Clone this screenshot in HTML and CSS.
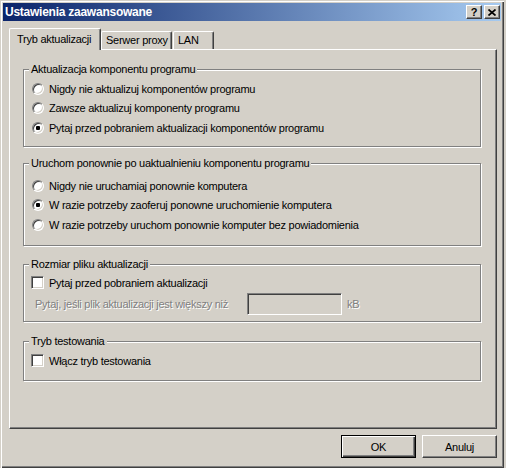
FILE: index.html
```html
<!DOCTYPE html>
<html lang="pl">
<head>
    <meta charset="UTF-8">
    <title>Ustawienia zaawansowane</title>
    <link rel="stylesheet" href="styles.css">
</head>
<body>
    <div class="window">
        <div class="titlebar">
            <span class="title">Ustawienia zaawansowane</span>
            <div class="caption-buttons">
                <button class="cap-btn help">?</button>
                <button class="cap-btn close">
                    <svg width="8" height="7" viewBox="0 0 8 7"><path d="M0.5 0.5 L7.5 6.5 M7.5 0.5 L0.5 6.5" stroke="#000" stroke-width="1.7" fill="none"/></svg>
                </button>
            </div>
        </div>

        <div class="tabs">
            <div class="tab active">Tryb aktualizacji</div>
            <div class="tab t-proxy">Serwer proxy</div>
            <div class="tab t-lan">LAN</div>
        </div>

        <div class="panel">
            <div class="group g1">
                <div class="group-title">Aktualizacja komponentu programu</div>
                <div class="rows">
                    <label class="row"><input type="radio" name="upd"> Nigdy nie aktualizuj komponentów programu</label>
                    <label class="row"><input type="radio" name="upd"> Zawsze aktualizuj komponenty programu</label>
                    <label class="row"><input type="radio" name="upd" checked> Pytaj przed pobraniem aktualizacji komponentów programu</label>
                </div>
            </div>

            <div class="group g2">
                <div class="group-title">Uruchom ponownie po uaktualnieniu komponentu programu</div>
                <div class="rows">
                    <label class="row"><input type="radio" name="rst"> Nigdy nie uruchamiaj ponownie komputera</label>
                    <label class="row"><input type="radio" name="rst" checked> W razie potrzeby zaoferuj ponowne uruchomienie komputera</label>
                    <label class="row"><input type="radio" name="rst"> W razie potrzeby uruchom ponownie komputer bez powiadomienia</label>
                </div>
            </div>

            <div class="group g3">
                <div class="group-title">Rozmiar pliku aktualizacji</div>
                <div class="rows">
                    <label class="row"><input type="checkbox"> Pytaj przed pobraniem aktualizacji</label>
                    <div class="row size-row">
                        <span class="disabled size-label">Pytaj, jeśli plik aktualizacji jest większy niż</span>
                        <input type="text" class="size-input" disabled>
                        <span class="disabled">kB</span>
                    </div>
                </div>
            </div>

            <div class="group g4">
                <div class="group-title">Tryb testowania</div>
                <div class="rows">
                    <label class="row"><input type="checkbox"> Włącz tryb testowania</label>
                </div>
            </div>
        </div>

        <div class="actions">
            <button class="btn default">OK</button>
            <button class="btn">Anuluj</button>
        </div>
    </div>
</body>
</html>
```

FILE: styles.css
```css
body {
    margin: 0;
    background-color: #d4d0c8;
    font-family: "Liberation Sans", Arial, sans-serif;
    font-size: 11px;
    letter-spacing: -0.25px;
    color: #000;
}
.window {
    width: 504px;
    height: 468px;
    box-sizing: border-box;
    padding: 3px;
    background-color: #d4d0c8;
    box-shadow: inset 1px 1px 0 #d4d0c8, inset 2px 2px 0 #fff,
                inset -1px -1px 0 #404040, inset -2px -2px 0 #808080;
}
.titlebar {
    height: 18px;
    display: flex;
    align-items: center;
    justify-content: space-between;
    padding: 0 1px 0 2px;
    background: linear-gradient(to right, #0a246a, #a6caf0);
    color: #fff;
    font-weight: bold;
}
.title {
    font-size: 12px;
}
.caption-buttons {
    display: flex;
    gap: 2px;
}
.cap-btn {
    width: 16px;
    height: 14px;
    padding: 0;
    display: flex;
    align-items: center;
    justify-content: center;
    background-color: #d4d0c8;
    border: 1px solid;
    border-color: #fff #404040 #404040 #fff;
    box-shadow: inset -1px -1px 0 #808080;
    font-family: "Liberation Sans", Arial, sans-serif;
    font-size: 11px;
    font-weight: bold;
    color: #000;
}
.help {
    line-height: 12px;
}
.tabs {
    display: flex;
    align-items: flex-end;
    height: 21px;
    margin: 7px 0 0 6px;
    position: relative;
    z-index: 1;
}
.tab {
    box-sizing: border-box;
    height: 18px;
    line-height: 17px;
    padding-left: 4px;
    border-top: 1px solid #fff;
    border-left: 1px solid #fff;
    border-right: 1px solid #404040;
    border-top-left-radius: 2px;
    border-top-right-radius: 2px;
    box-shadow: inset -1px 0 0 #808080;
    white-space: nowrap;
}
.tab.active {
    width: 92px;
    height: 22px;
    line-height: 21px;
    margin-bottom: -1px;
    padding-left: 7px;
    background-color: #d4d0c8;
}
.t-proxy {
    width: 71px;
}
.t-lan {
    width: 41px;
    margin-left: 1px;
}
.panel {
    width: 488px;
    height: 380px;
    box-sizing: border-box;
    margin-left: 6px;
    padding: 19px 15px 0 13px;
    border-top: 1px solid #fff;
    border-left: 1px solid #fff;
    border-right: 1px solid #404040;
    border-bottom: 1px solid #404040;
    box-shadow: inset -1px -1px 0 #808080;
}
.group {
    box-sizing: border-box;
    border: 1px solid #808080;
    box-shadow: 1px 1px 0 #fff, inset 1px 1px 0 #fff;
}
.group-title {
    width: fit-content;
    line-height: 13px;
    margin: -7px 0 0 5px;
    padding: 0 2px;
    background-color: #d4d0c8;
}
.g1 { height: 78px; }
.g2 { height: 83px; margin-top: 16px; }
.g3 { height: 58px; margin-top: 18px; }
.g4 { height: 40px; margin-top: 19px; }
.g1 .rows { padding-top: 3px; }
.g2 .rows { padding-top: 6px; }
.g3 .rows { padding-top: 2px; }
.g4 .rows { padding-top: 3px; }
.row {
    display: flex;
    align-items: center;
    height: 19.5px;
    white-space: nowrap;
}
input[type="radio"] {
    appearance: none;
    box-sizing: border-box;
    width: 12px;
    height: 12px;
    margin: 0 5px 0 8px;
    border-radius: 50%;
    border: 1px solid;
    border-color: #808080 #fff #fff #808080;
    box-shadow: inset 1px 1px 0 #404040, inset -1px -1px 0 #d4d0c8;
    background-color: #fff;
}
input[type="radio"]:checked {
    background: radial-gradient(circle, #000 2px, #fff 2.5px);
}
input[type="checkbox"] {
    appearance: none;
    box-sizing: border-box;
    width: 13px;
    height: 13px;
    margin: 0 5px 0 7px;
    border: 1px solid;
    border-color: #808080 #fff #fff #808080;
    box-shadow: inset 1px 1px 0 #404040, inset -1px -1px 0 #d4d0c8;
    background-color: #fff;
}
.size-row {
    height: 22px;
    padding-left: 11px;
}
.disabled {
    color: #808080;
    text-shadow: 1px 1px 0 #fff;
}
.size-label {
    width: 200px;
}
.size-input {
    box-sizing: border-box;
    width: 95px;
    height: 22px;
    margin: 0 5px 0 12px;
    border: 1px solid;
    border-color: #808080 #fff #fff #808080;
    box-shadow: inset 1px 1px 0 #404040, inset -1px -1px 0 #d4d0c8;
    background-color: #d4d0c8;
}
.actions {
    display: flex;
    justify-content: flex-end;
    gap: 6px;
    margin-top: 6px;
    padding-right: 4px;
}
.btn {
    width: 75px;
    height: 23px;
    padding: 0;
    background-color: #d4d0c8;
    border: 1px solid;
    border-color: #fff #404040 #404040 #fff;
    box-shadow: inset -1px -1px 0 #808080;
    font-family: "Liberation Sans", Arial, sans-serif;
    font-size: 11px;
    letter-spacing: -0.25px;
    color: #000;
}
.btn.default {
    border-color: #000;
    box-shadow: inset 1px 1px 0 #fff, inset -1px -1px 0 #404040, inset -2px -2px 0 #808080;
}
```
